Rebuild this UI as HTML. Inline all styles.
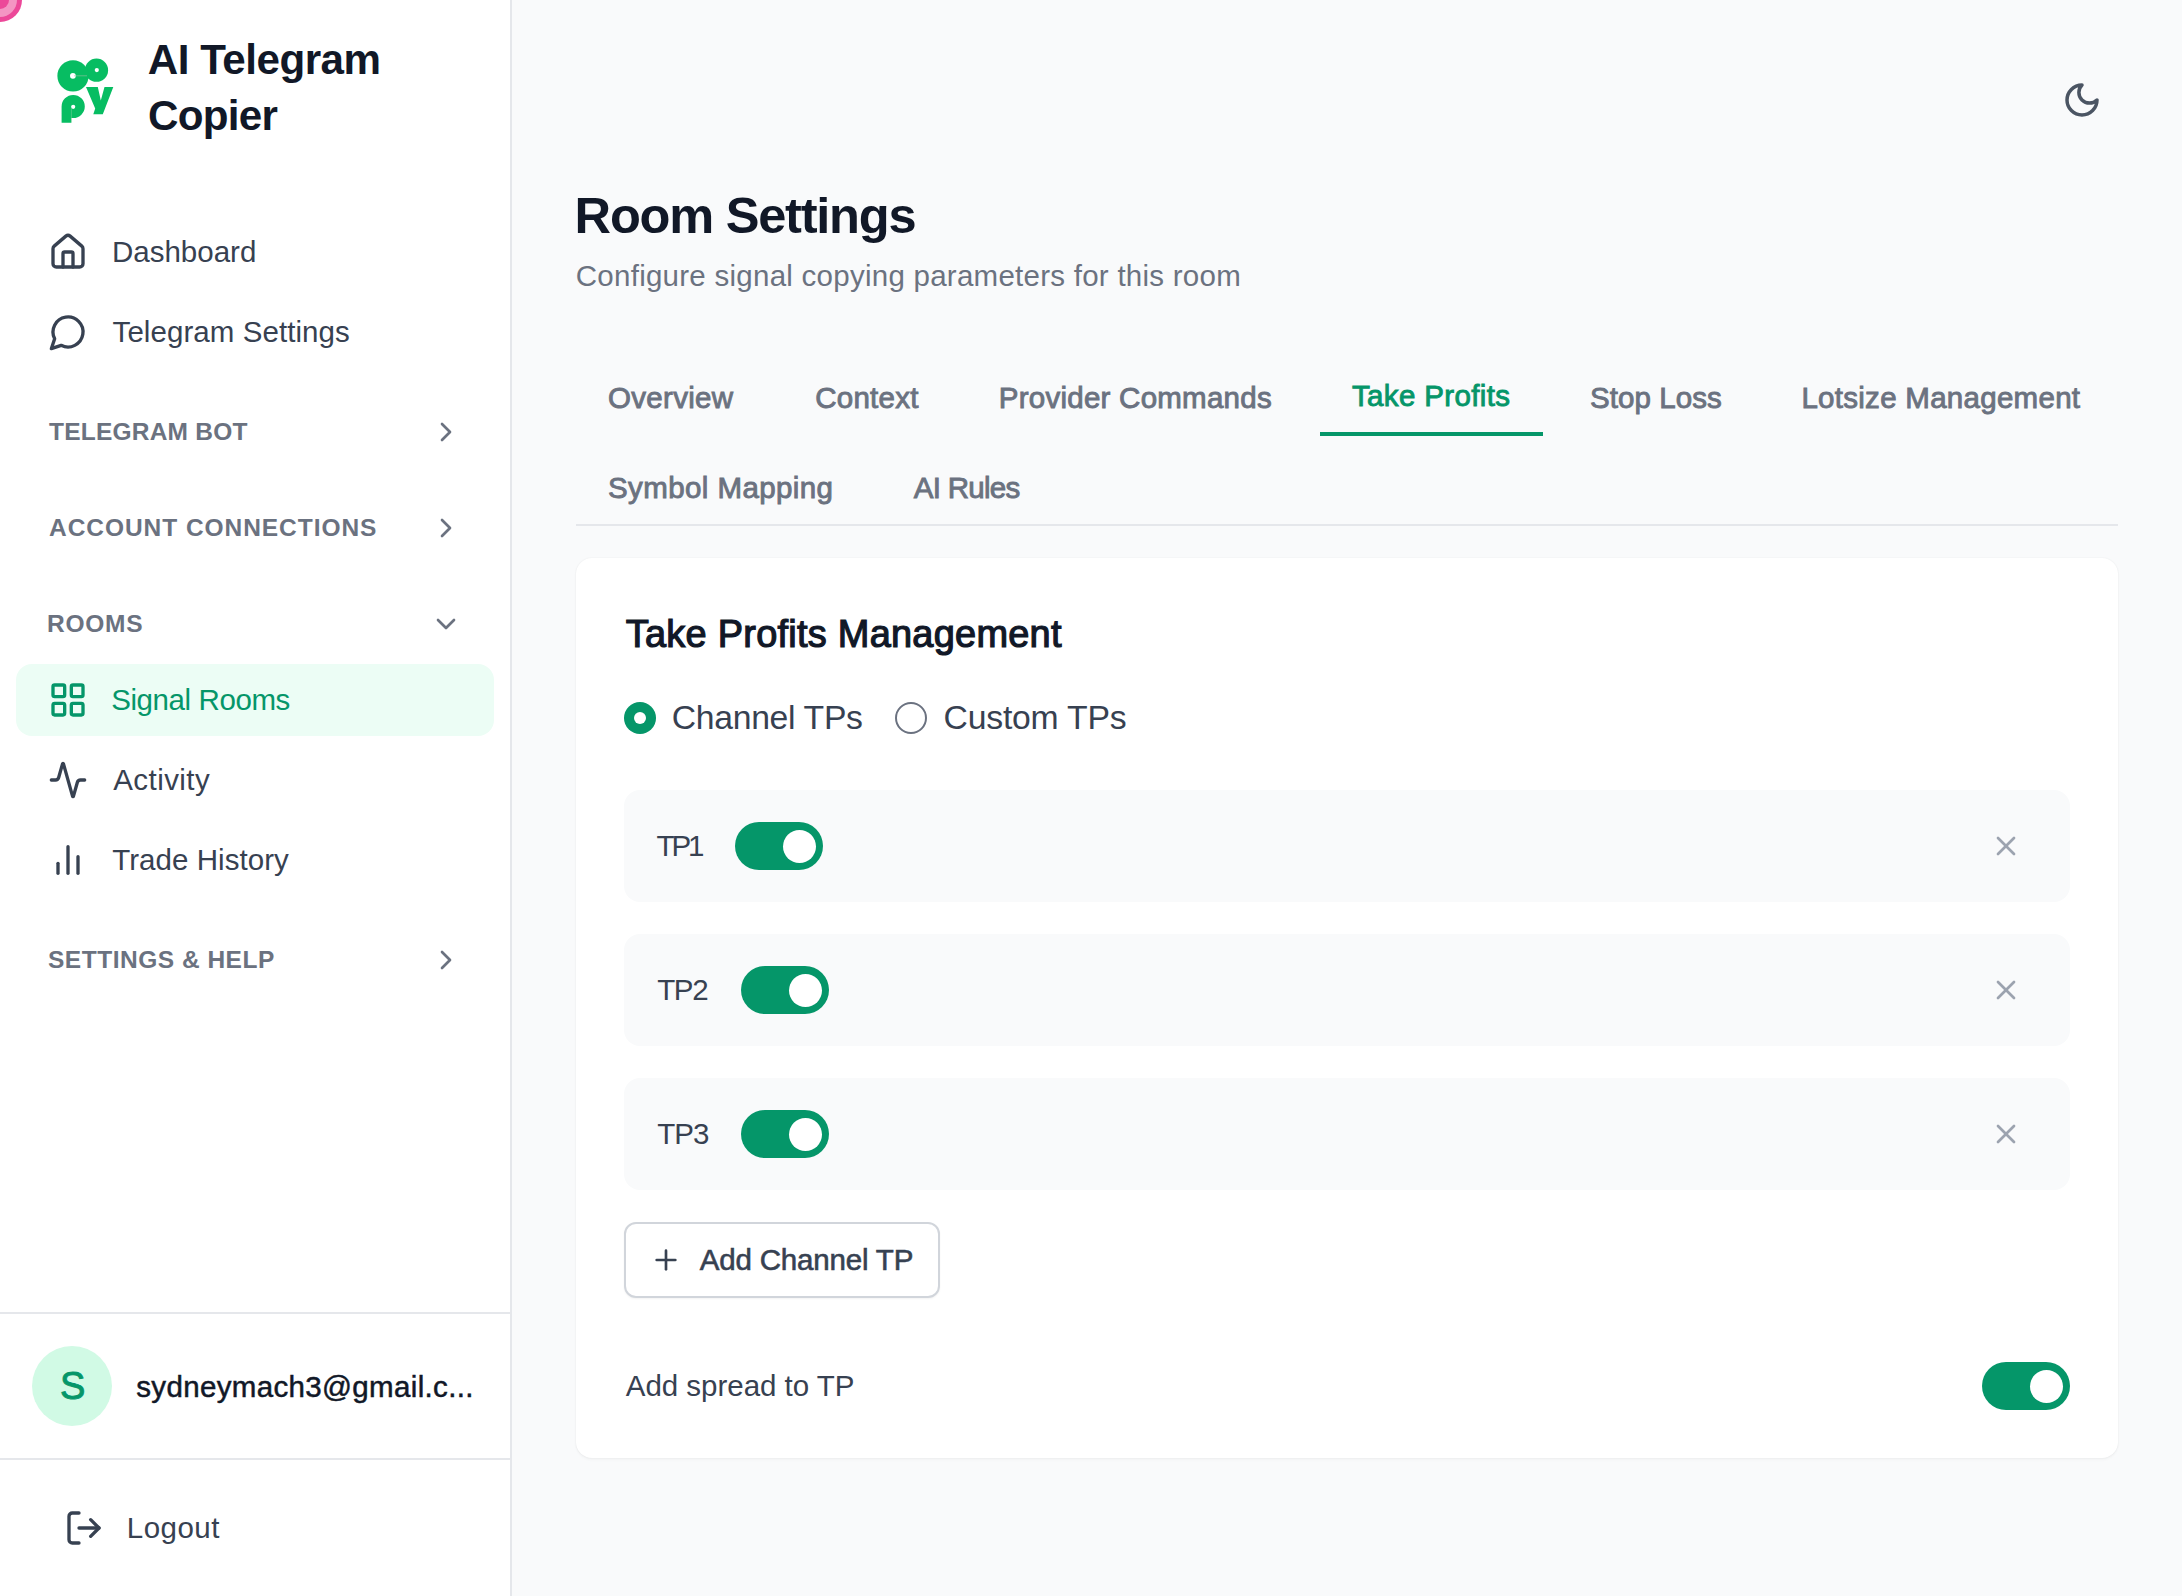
<!DOCTYPE html>
<html lang="en">
<head>
<meta charset="utf-8">
<title>Room Settings - AI Telegram Copier</title>
<style>
html,body{margin:0;padding:0;}
body{width:2182px;height:1596px;overflow:hidden;background:#f9fafb;position:relative;font-family:"Liberation Sans",sans-serif;}
.t{position:absolute;line-height:1;white-space:nowrap;}
.abs{position:absolute;}
svg.i{position:absolute;fill:none;stroke-linecap:round;stroke-linejoin:round;}
#sidebar{position:absolute;left:0;top:0;width:510px;height:1596px;background:#ffffff;border-right:2px solid #e5e7eb;}
.hline{position:absolute;left:0;width:510px;height:2px;background:#e5e7eb;}
.row{position:absolute;left:624px;width:1446px;height:112px;background:#f9fafb;border-radius:16px;}
.tog{position:absolute;width:88px;height:48px;border-radius:24px;background:#059669;}
.tog::after{content:"";position:absolute;right:7px;top:7.5px;width:33px;height:33px;border-radius:50%;background:#fff;}
</style>
</head>
<body>
<div id="sidebar"></div>
<!-- pink blob top-left -->
<div class="abs" style="left:-22px;top:-22px;width:44px;height:44px;border-radius:50%;background:#ec4899;"></div>
<div class="abs" style="left:-17px;top:-17px;width:34px;height:34px;border-radius:50%;background:#f495c3;"></div>
<div class="abs" style="left:-9px;top:-9px;width:18px;height:18px;border-radius:50%;background:#ec4899;"></div>

<!-- logo -->
<svg class="abs" style="left:40px;top:40px" width="100" height="100" viewBox="40 40 100 100">
  <g fill="#07bd62">
    <circle cx="96.5" cy="70.2" r="11.6"/>
    <circle cx="73" cy="75.9" r="15.6"/>
    <path d="M61.6 122.8 L61.6 106.5 A11.6 11.6 0 0 1 84.8 106.5 A11.6 11.6 0 0 1 73.2 118 L71.3 118 L71.3 122.8 Z"/>
    <path d="M86 87 L97.8 87 L100.8 100.5 L104.5 87 L113.3 87 L102.8 114.2 L93.3 114.2 L95.2 108.5 Z"/>
  </g>
  <g fill="#ffffff">
    <circle cx="72.9" cy="75.8" r="2.9"/>
    <circle cx="96.8" cy="70.1" r="2.1"/>
    <circle cx="73.2" cy="106.8" r="2.1"/>
  </g>
  <line x1="74" y1="75.8" x2="87" y2="75.8" stroke="#9bbfa5" stroke-width="0.6"/>
  <line x1="71.4" y1="108" x2="71.4" y2="122.5" stroke="#7fcf9f" stroke-width="0.5"/>
</svg>

<!-- sidebar icons -->
<svg class="i" style="left:48px;top:232px" width="40" height="40" viewBox="0 0 24 24" stroke="#374151" stroke-width="2"><path d="M15 21v-8a1 1 0 0 0-1-1h-4a1 1 0 0 0-1 1v8"/><path d="M3 10a2 2 0 0 1 .709-1.528l7-5.999a2 2 0 0 1 2.582 0l7 5.999A2 2 0 0 1 21 10v9a2 2 0 0 1-2 2H5a2 2 0 0 1-2-2z"/></svg>
<svg class="i" style="left:48px;top:312px" width="40" height="40" viewBox="0 0 24 24" stroke="#374151" stroke-width="2"><path d="M7.9 20A9 9 0 1 0 4 16.1L2 22Z"/></svg>
<svg class="i" style="left:430.3px;top:415.8px" width="32" height="32" viewBox="0 0 24 24" stroke="#6b7280" stroke-width="2"><path d="m9 18 6-6-6-6"/></svg>
<svg class="i" style="left:430.3px;top:511.8px" width="32" height="32" viewBox="0 0 24 24" stroke="#6b7280" stroke-width="2"><path d="m9 18 6-6-6-6"/></svg>
<svg class="i" style="left:430.2px;top:608px" width="32" height="32" viewBox="0 0 24 24" stroke="#6b7280" stroke-width="2"><path d="m6 9 6 6 6-6"/></svg>
<svg class="i" style="left:430.3px;top:943.8px" width="32" height="32" viewBox="0 0 24 24" stroke="#6b7280" stroke-width="2"><path d="m9 18 6-6-6-6"/></svg>

<div class="abs" style="left:16px;top:664px;width:478px;height:72px;border-radius:16px;background:#ecfdf5;"></div>
<svg class="i" style="left:48.4px;top:680.4px" width="40" height="40" viewBox="0 0 24 24" stroke="#059669" stroke-width="2"><rect width="7" height="7" x="3" y="3" rx="1"/><rect width="7" height="7" x="14" y="3" rx="1"/><rect width="7" height="7" x="14" y="14" rx="1"/><rect width="7" height="7" x="3" y="14" rx="1"/></svg>
<svg class="i" style="left:48px;top:760px" width="40" height="40" viewBox="0 0 24 24" stroke="#374151" stroke-width="2"><path d="M22 12h-2.48a2 2 0 0 0-1.93 1.46l-2.35 8.36a.25.25 0 0 1-.48 0L9.24 2.18a.25.25 0 0 0-.48 0l-2.35 8.36A2 2 0 0 1 4.49 12H2"/></svg>
<svg class="i" style="left:48px;top:840px" width="40" height="40" viewBox="0 0 24 24" stroke="#374151" stroke-width="2"><path d="M18 20V10"/><path d="M12 20V4"/><path d="M6 20v-6"/></svg>

<div class="hline" style="top:1312px"></div>
<div class="hline" style="top:1458px"></div>
<div class="abs" style="left:32px;top:1346px;width:80px;height:80px;border-radius:50%;background:#d1fae5;"></div>
<svg class="i" style="left:64px;top:1508px" width="40" height="40" viewBox="0 0 24 24" stroke="#374151" stroke-width="2"><path d="m16 17 5-5-5-5"/><path d="M21 12H9"/><path d="M9 21H5a2 2 0 0 1-2-2V5a2 2 0 0 1 2-2h4"/></svg>

<!-- main -->
<svg class="i" style="left:2061.5px;top:80px" width="40" height="40" viewBox="0 0 24 24" stroke="#4b5563" stroke-width="2.1"><path d="M12 3a6 6 0 0 0 9 9 9 9 0 1 1-9-9Z"/></svg>

<div class="abs" style="left:576px;top:524px;width:1542px;height:2px;background:#e5e7eb;"></div>
<div class="abs" style="left:1320px;top:432px;width:223px;height:4px;background:#059669;"></div>

<div class="abs" style="left:576px;top:558px;width:1542px;height:900px;background:#fff;border-radius:16px;box-shadow:0 0 2px rgba(0,0,0,0.07),0 2px 3px rgba(0,0,0,0.03);"></div>

<div class="abs" style="left:624px;top:702px;width:32px;height:32px;border-radius:50%;background:#059669;"></div>
<div class="abs" style="left:634px;top:712px;width:12px;height:12px;border-radius:50%;background:#fff;"></div>
<div class="abs" style="left:895px;top:702px;width:28px;height:28px;border-radius:50%;border:2px solid #6b7280;background:#fff;"></div>

<div class="row" style="top:790px"></div>
<div class="row" style="top:934px"></div>
<div class="row" style="top:1078px"></div>
<div class="tog" style="left:735px;top:822px"></div>
<div class="tog" style="left:741px;top:966px"></div>
<div class="tog" style="left:741px;top:1110px"></div>
<svg class="i" style="left:1990px;top:830px" width="32" height="32" viewBox="0 0 24 24" stroke="#9ca3af" stroke-width="2"><path d="M18 6 6 18"/><path d="m6 6 12 12"/></svg>
<svg class="i" style="left:1990px;top:974px" width="32" height="32" viewBox="0 0 24 24" stroke="#9ca3af" stroke-width="2"><path d="M18 6 6 18"/><path d="m6 6 12 12"/></svg>
<svg class="i" style="left:1990px;top:1118px" width="32" height="32" viewBox="0 0 24 24" stroke="#9ca3af" stroke-width="2"><path d="M18 6 6 18"/><path d="m6 6 12 12"/></svg>

<div class="abs" style="left:624px;top:1222px;width:312px;height:72px;border:2px solid #d1d5db;border-radius:12px;background:#fff;box-shadow:0 1px 2px 0 rgba(0,0,0,0.05);"></div>
<svg class="i" style="left:650px;top:1244px" width="32" height="32" viewBox="0 0 24 24" stroke="#374151" stroke-width="2"><path d="M5 12h14"/><path d="M12 5v14"/></svg>

<div class="tog" style="left:1982px;top:1362px"></div>

<div id="brand1" class="t" style="left:147.80px;top:39.06px;font-size:42.16px;font-weight:700;color:#111827;letter-spacing:-0.500px;">AI Telegram</div>
<div id="brand2" class="t" style="left:148.00px;top:95.06px;font-size:42.16px;font-weight:700;color:#111827;letter-spacing:-0.700px;">Copier</div>
<div id="nav1" class="t" style="left:112.00px;top:236.72px;font-size:29.51px;font-weight:400;color:#374151;letter-spacing:0.000px;">Dashboard</div>
<div id="nav2" class="t" style="left:112.60px;top:316.62px;font-size:29.51px;font-weight:400;color:#374151;letter-spacing:0.062px;">Telegram Settings</div>
<div id="sec1" class="t" style="left:49.00px;top:419.57px;font-size:24.5px;font-weight:700;color:#6b7280;letter-spacing:0.218px;">TELEGRAM BOT</div>
<div id="sec2" class="t" style="left:49.00px;top:515.77px;font-size:24.5px;font-weight:700;color:#6b7280;letter-spacing:0.950px;">ACCOUNT CONNECTIONS</div>
<div id="sec3" class="t" style="left:47.00px;top:612.07px;font-size:24.5px;font-weight:700;color:#6b7280;letter-spacing:0.750px;">ROOMS</div>
<div id="nav3" class="t" style="left:111.20px;top:685.02px;font-size:29.51px;font-weight:400;color:#059669;letter-spacing:-0.409px;">Signal Rooms</div>
<div id="nav4" class="t" style="left:113.20px;top:764.62px;font-size:29.51px;font-weight:400;color:#374151;letter-spacing:0.443px;">Activity</div>
<div id="nav5" class="t" style="left:112.20px;top:844.72px;font-size:29.51px;font-weight:400;color:#374151;letter-spacing:0.058px;">Trade History</div>
<div id="sec4" class="t" style="left:48.00px;top:947.97px;font-size:24.5px;font-weight:700;color:#6b7280;letter-spacing:0.507px;">SETTINGS &amp; HELP</div>
<div id="avS" class="t" style="left:60.00px;top:1366.70px;font-size:38px;font-weight:400;color:#059669;letter-spacing:0.000px;-webkit-text-stroke:0.9px currentColor;">S</div>
<div id="email" class="t" style="left:136.20px;top:1371.72px;font-size:29.51px;font-weight:400;color:#111827;letter-spacing:0.348px;-webkit-text-stroke:0.5px currentColor;">sydneymach3@gmail.c...</div>
<div id="logout" class="t" style="left:126.80px;top:1512.82px;font-size:29.51px;font-weight:400;color:#374151;letter-spacing:0.460px;">Logout</div>
<div id="h1" class="t" style="left:574.60px;top:191.10px;font-size:50.59px;font-weight:700;color:#111827;letter-spacing:-1.242px;">Room Settings</div>
<div id="sub" class="t" style="left:575.80px;top:260.62px;font-size:29.51px;font-weight:400;color:#6b7280;letter-spacing:0.258px;">Configure signal copying parameters for this room</div>
<div id="tab1" class="t" style="left:608.00px;top:382.82px;font-size:29.51px;font-weight:400;color:#6b7280;letter-spacing:0.300px;-webkit-text-stroke:0.9px currentColor;">Overview</div>
<div id="tab2" class="t" style="left:815.20px;top:382.82px;font-size:29.51px;font-weight:400;color:#6b7280;letter-spacing:0.267px;-webkit-text-stroke:0.9px currentColor;">Context</div>
<div id="tab3" class="t" style="left:998.80px;top:382.82px;font-size:29.51px;font-weight:400;color:#6b7280;letter-spacing:0.250px;-webkit-text-stroke:0.9px currentColor;">Provider Commands</div>
<div id="tab4" class="t" style="left:1352.00px;top:380.72px;font-size:29.51px;font-weight:400;color:#059669;letter-spacing:0.355px;-webkit-text-stroke:0.9px currentColor;">Take Profits</div>
<div id="tab5" class="t" style="left:1590.00px;top:382.82px;font-size:29.51px;font-weight:400;color:#6b7280;letter-spacing:0.075px;-webkit-text-stroke:0.9px currentColor;">Stop Loss</div>
<div id="tab6" class="t" style="left:1801.40px;top:382.82px;font-size:29.51px;font-weight:400;color:#6b7280;letter-spacing:0.282px;-webkit-text-stroke:0.9px currentColor;">Lotsize Management</div>
<div id="tab7" class="t" style="left:608.00px;top:473.22px;font-size:29.51px;font-weight:400;color:#6b7280;letter-spacing:0.408px;-webkit-text-stroke:0.9px currentColor;">Symbol Mapping</div>
<div id="tab8" class="t" style="left:913.80px;top:473.22px;font-size:29.51px;font-weight:400;color:#6b7280;letter-spacing:-0.714px;-webkit-text-stroke:0.9px currentColor;">AI Rules</div>
<div id="cardh" class="t" style="left:625.80px;top:616.35px;font-size:37.94px;font-weight:400;color:#111827;letter-spacing:0.259px;-webkit-text-stroke:1.2px currentColor;">Take Profits Management</div>
<div id="r1" class="t" style="left:671.80px;top:701.33px;font-size:33.73px;font-weight:400;color:#374151;letter-spacing:-0.320px;">Channel TPs</div>
<div id="r2" class="t" style="left:943.60px;top:701.33px;font-size:33.73px;font-weight:400;color:#374151;letter-spacing:-0.211px;">Custom TPs</div>
<div id="tp1" class="t" style="left:656.40px;top:831.02px;font-size:29.51px;font-weight:400;color:#374151;letter-spacing:-3.000px;">TP1</div>
<div id="tp2" class="t" style="left:657.20px;top:975.12px;font-size:29.51px;font-weight:400;color:#374151;letter-spacing:-1.350px;">TP2</div>
<div id="tp3" class="t" style="left:657.20px;top:1119.02px;font-size:29.51px;font-weight:400;color:#374151;letter-spacing:-1.000px;">TP3</div>
<div id="addbtn" class="t" style="left:699.80px;top:1245.12px;font-size:29.51px;font-weight:400;color:#374151;letter-spacing:-0.185px;-webkit-text-stroke:0.6px currentColor;">Add Channel TP</div>
<div id="spread" class="t" style="left:625.80px;top:1371.32px;font-size:29.51px;font-weight:400;color:#374151;letter-spacing:-0.027px;">Add spread to TP</div>
</body>
</html>
